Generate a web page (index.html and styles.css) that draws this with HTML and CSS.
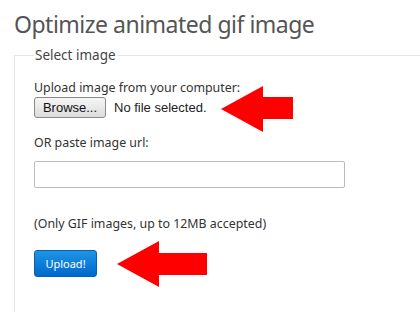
FILE: index.html
```html
<!DOCTYPE html>
<html lang="en">
<head>
    <meta charset="UTF-8">
    <title>Optimize animated gif image</title>
    <link rel="stylesheet" href="styles.css">
</head>
<body>
    <div class="page">
        <h1>Optimize animated gif image</h1>

        <fieldset class="upload-box">
            <legend>Select image</legend>

            <label class="field-label">Upload image from your computer:</label>
            <div class="file-row">
                <button type="button" class="browse-btn">Browse...</button>
                <span class="file-name">No file selected.</span>
                <svg class="arrow arrow-file" width="72" height="46" viewBox="0 0 72 46">
                    <polygon points="0,23 42,0 42,11 72,11 72,33 42,33 42,46" fill="#ff0000"/>
                </svg>
            </div>

            <label class="field-label url-label" for="url">OR paste image url:</label>
            <input type="text" id="url" class="url-input">

            <p class="note">(Only GIF images, up to 12MB accepted)</p>

            <div class="submit-row">
                <button type="submit" class="upload-btn">Upload!</button>
                <svg class="arrow arrow-submit" width="90" height="46" viewBox="0 0 90 46">
                    <polygon points="0,23 42,0 42,12 90,12 90,34 42,34 42,46" fill="#ff0000"/>
                </svg>
            </div>
        </fieldset>
    </div>
</body>
</html>
```

FILE: styles.css
```css
body {
    margin: 0;
    background: white;
    font-family: "Noto Sans", "DejaVu Sans", sans-serif;
    color: #333;
}
.page {
    display: flex;
    flex-direction: column;
    height: 100vh;
    box-sizing: border-box;
    padding-left: 14px;
    overflow: hidden;
}
h1 {
    font-size: 23px;
    font-weight: normal;
    color: #555;
    margin: 0;
    padding-top: 6px;
    line-height: 36px;
    letter-spacing: -0.5px;
}
.upload-box {
    flex: 1;
    border: 1px solid #e6e6e6;
    border-right: none;
    border-bottom: none;
    margin: 4px 0 0 0;
    padding: 16px 0 0 19px;
}
.upload-box legend {
    font-size: 13.5px;
    color: #444;
    padding: 0 1px;
}
.field-label {
    display: block;
    font-size: 12.4px;
    line-height: 16px;
}
.file-row {
    position: relative;
    display: flex;
    align-items: center;
    gap: 8px;
    margin-top: 1px;
}
.browse-btn {
    font-family: "Liberation Sans", Arial, sans-serif;
    font-size: 13px;
    width: 72px;
    height: 21px;
    padding: 0;
    border: 1px solid #8a8a8a;
    border-radius: 3px;
    background: linear-gradient(#f6f6f6, #dcdcdc);
    color: #111;
}
.file-name {
    font-family: "Liberation Sans", Arial, sans-serif;
    font-size: 13px;
    color: #222;
}
.arrow {
    position: absolute;
}
.arrow-file {
    left: 187px;
    top: -11px;
}
.url-label {
    margin-top: 17px;
}
.url-input {
    display: block;
    box-sizing: border-box;
    width: 311px;
    height: 27px;
    margin-top: 10px;
    border: 1px solid #bbb;
    border-radius: 2px;
}
.note {
    font-size: 12.4px;
    line-height: 16px;
    margin: 28px 0 0 0;
}
.submit-row {
    position: relative;
    margin-top: 18px;
}
.upload-btn {
    font-family: "Noto Sans", sans-serif;
    font-size: 11px;
    color: white;
    width: 63px;
    height: 27px;
    padding: 0;
    border: 1px solid #0a5fb4;
    border-radius: 3px;
    background: linear-gradient(#1e95e3, #0068cc);
}
.arrow-submit {
    left: 83px;
    top: -9px;
}
```
